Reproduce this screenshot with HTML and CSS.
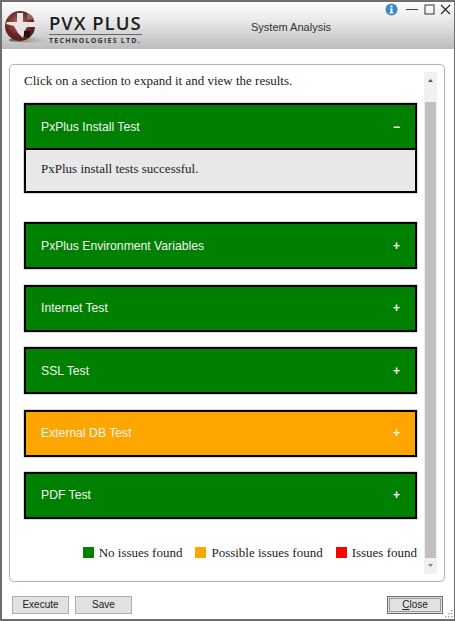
FILE: index.html
```html
<!DOCTYPE html>
<html lang="en">
<head>
<meta charset="utf-8">
<title>System Analysis</title>
<link rel="stylesheet" href="styles.css">
</head>
<body>
<div class="window">
  <header class="titlebar">
    <div class="logo">
      <svg class="globe" width="46" height="40" viewBox="0 0 46 40">
        <defs>
          <radialGradient id="g" cx="0.45" cy="0.4" r="0.7">
            <stop offset="0" stop-color="#a86a68"/>
            <stop offset="0.6" stop-color="#6d2523"/>
            <stop offset="1" stop-color="#3a1615"/>
          </radialGradient>
          <linearGradient id="s" x1="0" x2="1" y1="0" y2="0">
            <stop offset="0" stop-color="#555"/>
            <stop offset="1" stop-color="#aaa" stop-opacity="0"/>
          </linearGradient>
        </defs>
        <ellipse cx="26" cy="33" rx="20" ry="2.500" fill="url(#s)"/>
        <circle cx="17" cy="19" r="15" fill="url(#g)"/>
        <path d="M14 6h6v9h12v5H24l-2 3-2 8-5-5-4-7-8-2 1-2h10z" fill="#e9e2e2"/>
        <path d="M21 24h6v6h-6z" fill="#241010"/>
        <path d="M24 6c3 1 6 3 7 6l-7 1z" fill="#8d6b6a"/>
      </svg>
      <div class="brand">
        <div class="brand-name">PVX PLUS</div>
        <div class="brand-sub">TECHNOLOGIES LTD.</div>
      </div>
    </div>
    <div class="title">System Analysis</div>
    <div class="controls">
      <svg class="ctl-info" width="13" height="13" viewBox="0 0 13 13"><circle cx="6.500" cy="6.500" r="6" fill="#3f86c8"/><path d="M5.500 2.500h2v2h-2zM5 5.500h2.500v4h1v1h-4v-1h1v-3H5z" fill="#fff"/></svg>
      <svg class="ctl-min" width="12" height="11" viewBox="0 0 12 11"><path d="M0 5.500h12" stroke="#444" stroke-width="1"/></svg>
      <svg class="ctl-max" width="11" height="11" viewBox="0 0 11 11"><rect x="1" y="1" width="9" height="9" fill="none" stroke="#333" stroke-width="1"/></svg>
      <svg width="11" height="11" viewBox="0 0 11 11"><path d="M1 1l9 9M10 1l-9 9" stroke="#222" stroke-width="1.100"/></svg>
    </div>
  </header>

  <main class="content">
    <section class="card">
      <div class="list">
        <p class="intro">Click on a section to expand it and view the results.</p>
        <div class="section open">
          <div class="head green"><span>PxPlus Install Test</span><b class="sign">−</b></div>
          <div class="body">PxPlus install tests successful.</div>
        </div>
        <div class="head green boxed"><span>PxPlus Environment Variables</span><b class="sign">+</b></div>
        <div class="head green boxed"><span>Internet Test</span><b class="sign">+</b></div>
        <div class="head green boxed"><span>SSL Test</span><b class="sign">+</b></div>
        <div class="head orange boxed"><span>External DB Test</span><b class="sign">+</b></div>
        <div class="head green boxed"><span>PDF Test</span><b class="sign">+</b></div>
        <div class="legend">
          <span class="key"><i class="swatch s-green"></i>No issues found</span>
          <span class="key"><i class="swatch s-orange"></i>Possible issues found</span>
          <span class="key"><i class="swatch s-red"></i>Issues found</span>
        </div>
      </div>
      <div class="scrollbar">
        <svg class="arrow" width="13" height="30" viewBox="0 0 13 30"><path d="M4 10h5l-2.500-3z" fill="#555"/></svg>
        <div class="thumb"></div>
        <svg class="arrow-down" width="13" height="16" viewBox="0 0 13 16"><path d="M4 6h5l-2.500 3z" fill="#888"/></svg>
      </div>
    </section>

    <footer class="buttons">
      <button class="btn">Execute</button>
      <button class="btn">Save</button>
      <button class="btn close"><span><u>C</u>lose</span></button>
    </footer>
  </main>
  <svg class="grip" width="10" height="10" viewBox="0 0 10 10"><path d="M7 1h1.500v1.500H7zM4 4h1.500v1.500H4zM7 4h1.500v1.500H7zM1 7h1.500v1.500H1zM4 7h1.500v1.500H4zM7 7h1.500v1.500H7z" fill="#aaa"/></svg>
</div>
</body>
</html>
```
FILE: styles.css
```css
* { box-sizing: border-box; }
html, body { margin: 0; padding: 0; width: 455px; height: 621px; overflow: hidden; background: #fff; }

.window {
  position: relative;
  width: 455px;
  height: 621px;
  border: 2px solid #6e6e6e;
  border-right-width: 1px;
  background: #fff;
  display: flex;
  flex-direction: column;
}

.titlebar {
  position: relative;
  height: 47px;
  flex: none;
  display: flex;
  align-items: flex-start;
  background: linear-gradient(#fdfdfd 0%, #ececec 35%, #bcbcbc 100%);
}
.logo { display: flex; width: 249px; padding: 5px 0 0 1px; }
.globe { flex: none; }
.brand { margin-left: 0; padding-top: 6px; }
.brand-name {
  font: 600 18.500px/20px "Open Sans", sans-serif;
  letter-spacing: 1px;
  color: #1c1c1c;
  white-space: nowrap;
}
.brand-sub {
  margin-top: 1px;
  padding-top: 2px;
  border-top: 1px solid #666;
  font: 700 7px/8px "Open Sans", sans-serif;
  letter-spacing: 1.250px;
  color: #333;
  white-space: nowrap;
}
.title {
  padding-top: 18px;
  font: 11px/14px "Liberation Sans", Arial, sans-serif;
  color: #333;
}
.controls {
  position: absolute;
  top: 1px;
  right: 3px;
  display: flex;
  align-items: center;
}
.ctl-info { margin-right: 8px; }
.ctl-min { margin-right: 6px; }
.ctl-max { margin-right: 5px; }

.content {
  flex: 1;
  display: flex;
  flex-direction: column;
  padding: 15px 9px 0 7px;
  min-height: 0;
}

.card {
  width: 436px;
  height: 518px;
  flex: none;
  display: flex;
  justify-content: space-between;
  padding: 7px 7px 7px 14px;
  border: 1px solid #b4b4b4;
  border-radius: 5px;
  box-shadow: 0 0 1px #ccc;
}

.list { width: 393px; display: flex; flex-direction: column; }
.intro {
  margin: 0 0 13px;
  height: 18px;
  font: 13px/18px "Liberation Serif", "Times New Roman", serif;
  color: #222;
}

.head {
  height: 47px;
  flex: none;
  display: flex;
  align-items: center;
  justify-content: space-between;
  padding: 0 15px;
  border: 2px solid #000;
  box-shadow: 0 0 1px #222;
  font: 12.200px/16px "Liberation Sans", Arial, sans-serif;
  color: #f4f4f4;
}
.green { background: #008000; }
.orange { background: #ffa500; }
.boxed { margin-bottom: 15.400px; }
.sign { font: 700 12px/12px "Liberation Sans", Arial, sans-serif; color: #fff; }

.section { margin-bottom: 29.400px; }
.body {
  height: 43px;
  padding: 10px 15px 0;
  background: #e8e8e8;
  border: 2px solid #000;
  border-top: 0;
  box-shadow: 0 0 1px #222;
  font: 13px/18px "Liberation Serif", "Times New Roman", serif;
  color: #222;
}

.legend {
  display: flex;
  justify-content: flex-end;
  gap: 13px;
  margin-top: 9.600px;
  font: 13px/18px "Liberation Serif", "Times New Roman", serif;
  color: #222;
}
.key { display: flex; align-items: center; white-space: nowrap; }
.swatch { width: 11px; height: 11px; margin-right: 5px; }
.s-green { background: #008000; }
.s-orange { background: #ffa500; }
.s-red { background: #ff0000; }

.scrollbar {
  width: 13px;
  height: 502px;
  flex: none;
  display: flex;
  flex-direction: column;
  align-items: center;
  background: #f0f0f0;
}
.arrow { flex: none; }
.thumb { width: 11px; height: 456px; flex: none; background: #c0c0c0; }
.arrow-down { flex: none; }

.buttons { display: flex; gap: 6px; margin-top: 14px; margin-left: 3px; width: 431px; }
.btn {
  width: 57px;
  height: 18px;
  padding: 0;
  background: #e1e1e1;
  border: 1px solid #adadad;
  font: 10px/14px "Liberation Sans", Arial, sans-serif;
  color: #222;
}
.close {
  width: 56px;
  margin-left: auto;
  padding: 1px;
  border-color: #6f6f6f;
}
.close span { display: block; height: 14px; border: 1px solid #9a9a9a; line-height: 12px; }

.grip { position: absolute; right: 0; bottom: 0; }
```
